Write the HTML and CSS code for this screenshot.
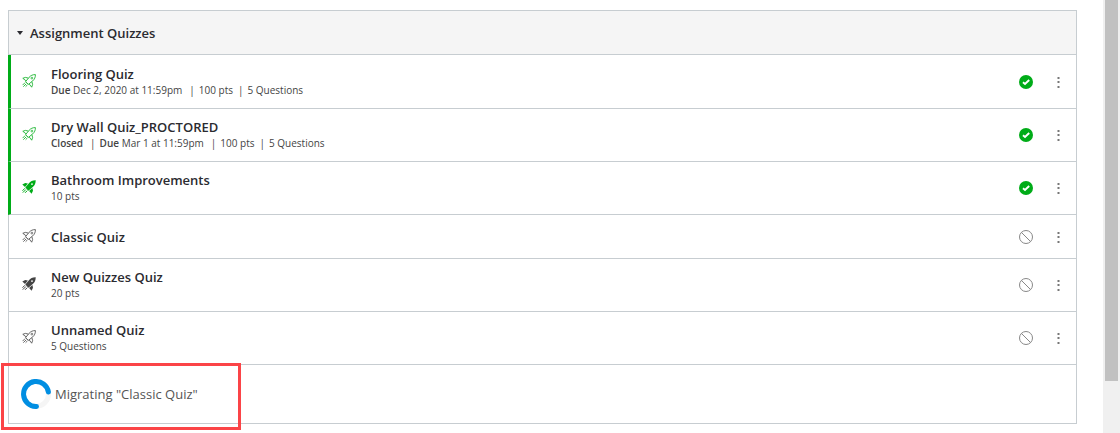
FILE: index.html
```html
<!DOCTYPE html>
<html lang="en">
<head>
<meta charset="utf-8">
<title>Quizzes</title>
<link rel="stylesheet" href="styles.css">
</head>
<body>
<svg class="defs" aria-hidden="true">
  <symbol id="rocket-line" viewBox="0 0 14 14">
    <path d="M13.4.6C10.700.5 8.700 1.500 7.100 3.300L3.600 7.600 6.400 10.400 10.700 6.900C12.500 5.300 13.500 3.300 13.400.6ZM6.400 4.100 3.400 3.400.8 4.300 4.200 6.900M9.900 7.600 10.600 10.600 9.700 13.200 7.100 9.800M3.200 8.500.6 11.100M4.300 9.700 1.300 12.700M5.500 10.800 3.600 12.700" fill="none" stroke="currentColor" stroke-width=".8" stroke-linejoin="round"/>
    <circle cx="9.900" cy="4.100" r=".9" fill="none" stroke="currentColor" stroke-width=".7"/>
  </symbol>
  <symbol id="rocket-solid" viewBox="0 0 14 14">
    <path d="M13.700.3C10.700.2 8.500 1.300 6.900 3.200L3.300 7.600 6.400 10.700 10.800 7.100C12.700 5.500 13.800 3.300 13.700.3ZM10 3.200A.9.9 0 1 1 10 5 .9.9 0 0 1 10 3.200ZM5.900 3.600 3.200 3 .3 4.400 3 6.900ZM10.400 8.100 11 10.800 9.600 13.700 7.100 11Z" fill="currentColor" fill-rule="evenodd"/>
    <path d="M2.900 8.300.5 10.700M3.900 9.500.8 12.600M5.300 10.600 3.100 12.800" stroke="currentColor" stroke-width="1"/>
  </symbol>
  <symbol id="published" viewBox="0 0 14 14">
    <circle cx="7" cy="7" r="7" fill="currentColor"/>
    <path d="M4 7.300 6 9 10.200 5" fill="none" stroke="#fff" stroke-width="1.900"/>
  </symbol>
  <symbol id="unpublished" viewBox="0 0 14 14">
    <circle cx="7" cy="7" r="6.500" fill="none" stroke="currentColor"/>
    <path d="M2.400 2.400 11.600 11.600" stroke="currentColor"/>
  </symbol>
  <symbol id="dots" viewBox="0 0 3 12">
    <path d="M.5 1h2v2h-2zM.5 5h2v2h-2zM.5 10h2v2h-2z" fill="currentColor"/>
  </symbol>
</svg>
<div class="page">
  <main class="content">
    <section class="group" aria-labelledby="group-title">
      <h2 class="group-header">
        <button class="group-toggle" id="group-title" type="button" aria-expanded="true">
          <svg class="caret" viewBox="0 0 6 4" aria-hidden="true"><path d="M0 0h6L3 4z" fill="currentColor"/></svg>
          Assignment Quizzes
        </button>
      </h2>
      <ul class="quiz-list">
        <li class="quiz is-published">
          <svg class="quiz-icon" aria-hidden="true"><use href="#rocket-line"/></svg>
          <div class="quiz-info">
            <a class="quiz-title" href="#flooring">Flooring Quiz</a>
            <ul class="details"><li class="date"><b>Due</b> Dec 2, 2020 at 11:59pm</li><li>100 pts</li><li>5 Questions</li></ul>
          </div>
          <button class="status" type="button" aria-label="Published"><svg aria-hidden="true"><use href="#published"/></svg></button>
          <button class="menu" type="button" aria-label="Manage Flooring Quiz"><svg aria-hidden="true"><use href="#dots"/></svg></button>
        </li>
        <li class="quiz is-published">
          <svg class="quiz-icon" aria-hidden="true"><use href="#rocket-line"/></svg>
          <div class="quiz-info">
            <a class="quiz-title" href="#drywall">Dry Wall Quiz_PROCTORED</a>
            <ul class="details"><li class="date"><b>Closed</b></li><li class="date"><b>Due</b> Mar 1 at 11:59pm</li><li>100 pts</li><li>5 Questions</li></ul>
          </div>
          <button class="status" type="button" aria-label="Published"><svg aria-hidden="true"><use href="#published"/></svg></button>
          <button class="menu" type="button" aria-label="Manage Dry Wall Quiz"><svg aria-hidden="true"><use href="#dots"/></svg></button>
        </li>
        <li class="quiz is-published">
          <svg class="quiz-icon" aria-hidden="true"><use href="#rocket-solid"/></svg>
          <div class="quiz-info">
            <a class="quiz-title" href="#bathroom">Bathroom Improvements</a>
            <ul class="details"><li>10 pts</li></ul>
          </div>
          <button class="status" type="button" aria-label="Published"><svg aria-hidden="true"><use href="#published"/></svg></button>
          <button class="menu" type="button" aria-label="Manage Bathroom Improvements"><svg aria-hidden="true"><use href="#dots"/></svg></button>
        </li>
        <li class="quiz">
          <svg class="quiz-icon" aria-hidden="true"><use href="#rocket-line"/></svg>
          <div class="quiz-info">
            <a class="quiz-title" href="#classic">Classic Quiz</a>
          </div>
          <button class="status" type="button" aria-label="Unpublished"><svg aria-hidden="true"><use href="#unpublished"/></svg></button>
          <button class="menu" type="button" aria-label="Manage Classic Quiz"><svg aria-hidden="true"><use href="#dots"/></svg></button>
        </li>
        <li class="quiz">
          <svg class="quiz-icon" aria-hidden="true"><use href="#rocket-solid"/></svg>
          <div class="quiz-info">
            <a class="quiz-title" href="#new">New Quizzes Quiz</a>
            <ul class="details"><li>20 pts</li></ul>
          </div>
          <button class="status" type="button" aria-label="Unpublished"><svg aria-hidden="true"><use href="#unpublished"/></svg></button>
          <button class="menu" type="button" aria-label="Manage New Quizzes Quiz"><svg aria-hidden="true"><use href="#dots"/></svg></button>
        </li>
        <li class="quiz">
          <svg class="quiz-icon" aria-hidden="true"><use href="#rocket-line"/></svg>
          <div class="quiz-info">
            <a class="quiz-title" href="#unnamed">Unnamed Quiz</a>
            <ul class="details"><li>5 Questions</li></ul>
          </div>
          <button class="status" type="button" aria-label="Unpublished"><svg aria-hidden="true"><use href="#unpublished"/></svg></button>
          <button class="menu" type="button" aria-label="Manage Unnamed Quiz"><svg aria-hidden="true"><use href="#dots"/></svg></button>
        </li>
        <li class="migrating">
          <svg class="spinner" viewBox="0 0 30 30" aria-hidden="true">
            <circle cx="15" cy="15" r="12.500" fill="none" stroke="#f5f5f5" stroke-width="5"/>
            <path d="M15.500 27.500A12.500 12.500 0 1 1 27.400 13" fill="none" stroke="#008ee2" stroke-width="5" stroke-linecap="round"/>
          </svg>
          <span>Migrating "Classic Quiz"</span>
          <div class="highlight"></div>
        </li>
      </ul>
    </section>
  </main>
  <div class="scrollbar"><div class="scroll-thumb"></div></div>
</div>
</body>
</html>
```

FILE: styles.css
```css
* { box-sizing: border-box; }

body {
  margin: 0;
  background: #fff;
  color: #2d3b45;
  font: 13px/18px "Open Sans", "Noto Sans", sans-serif;
}

ul, h2 { margin: 0; padding: 0; list-style: none; }

button { border: 0; background: none; padding: 0; font: inherit; color: inherit; }

.defs { display: none; }

.page { display: flex; min-height: 100vh; }

.content { flex: 1; padding: 10px 26px 9px 8px; }

.group { border: 1px solid #c7cdd1; }

.group-header {
  background: #f5f5f5;
  border-bottom: 1px solid #c7cdd1;
  padding: 13px 8px 12px;
  line-height: 18px;
}

.group-toggle {
  display: flex;
  align-items: center;
  gap: 7px;
  font-size: 13px;
  font-weight: 600;
  line-height: 18px;
  color: #2b2b30;
}

.caret { width: 6px; height: 4px; }

.quiz {
  display: flex;
  align-items: center;
  min-height: 44px;
  padding: 9px 11px 9px 13px;
  border-bottom: 1px solid #c7cdd1;
  color: #444;
}

.quiz:first-child { padding-top: 10px; }

.is-published {
  margin-left: -1px;
  padding-left: 11px;
  border-left: 3px solid #00ac18;
}

.quiz-icon { width: 14px; height: 14px; margin: 0 15px 2px 0; flex: none; }

.is-published .quiz-icon, .is-published .status { color: #00ac18; }

.quiz-info { flex: 1; }

.quiz-title {
  display: table;
  font-weight: 600;
  color: #2b2b30;
  text-decoration: none;
}

.details {
  display: flex;
  flex-wrap: wrap;
  padding-bottom: 2px;
  font-size: 10px;
  line-height: 14px;
  color: #444;
}

.details b { font-weight: 600; }

.details li + li::before { content: "|"; margin: 0 4px 0 5px; }

.details .date + li::before { margin-left: 7px; }

.status, .menu { display: flex; align-items: center; justify-content: center; height: 24px; }

.status { width: 14px; color: #888; }

.status svg { width: 14px; height: 14px; }

.menu { width: 14px; margin-left: 18px; color: #777; }

.menu svg { width: 3px; height: 12px; }

.migrating {
  position: relative;
  display: flex;
  align-items: center;
  gap: 4px;
  padding: 14px 12px;
  color: #555;
}

.spinner { width: 30px; height: 30px; }

.highlight {
  position: absolute;
  top: -2px;
  left: -8px;
  width: 240px;
  height: 67px;
  border: 3px solid #fb4447;
}

.scrollbar { width: 17px; padding: 0 2px; background: #f0f0f0; }

.scroll-thumb { height: 88vh; background: #c1c1c1; }
```
